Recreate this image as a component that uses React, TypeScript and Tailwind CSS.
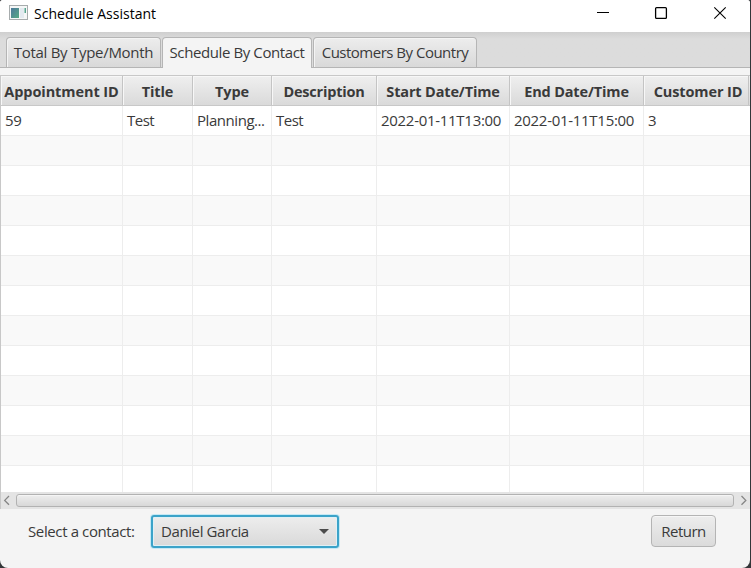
import React from "react";

const columns = [
  { name: "Appointment ID", value: "59", width: "w-[122px]", head: "tracking-[-0.08px]", cell: "tracking-[-0.3px]" },
  { name: "Title", value: "Test", width: "w-[70px]", head: "tracking-[-0.1px]", cell: "tracking-[-0.5px]" },
  { name: "Type", value: "Planning...", width: "w-[79px]", head: "tracking-[-0.1px]", cell: "tracking-[-0.45px]" },
  { name: "Description", value: "Test", width: "w-[105px]", head: "tracking-[-0.2px]", cell: "tracking-[-0.5px]" },
  { name: "Start Date/Time", value: "2022-01-11T13:00", width: "w-[133px]", head: "tracking-[-0.15px]", cell: "tracking-[-0.29px]" },
  { name: "End Date/Time", value: "2022-01-11T15:00", width: "w-[134px]", head: "tracking-[-0.15px]", cell: "tracking-[-0.29px]" },
  { name: "Customer ID", value: "3", width: "w-[105px]", head: "tracking-[-0.12px] pl-[4px]", cell: "tracking-[-0.3px]" },
];

const tabs = [
  { label: "Total By Type/Month", width: "w-[155px]", tracking: "tracking-[-0.28px]" },
  { label: "Schedule By Contact", width: "w-[150px]", tracking: "tracking-[-0.4px]" },
  { label: "Customers By Country", width: "w-[164px]", tracking: "tracking-[-0.5px]" },
];

function TitleBar() {
  return (
    <header className="flex h-8 shrink-0 items-start bg-white text-black">
      <svg className="ml-[9px] mt-[5px] shrink-0" width="19" height="15" viewBox="0 0 19 15">
        <defs>
          <linearGradient id="app" x1="0" y1="0" x2="1" y2="1">
            <stop offset="0" stopColor="#4d789b" />
            <stop offset="1" stopColor="#55aa84" />
          </linearGradient>
        </defs>
        <rect x="0.5" y="0.5" width="18" height="14" fill="#f5f7f7" stroke="#a7acad" />
        <rect x="2" y="3" width="8" height="10" fill="url(#app)" />
        <rect x="11" y="3" width="4" height="10" fill="#e3eaf0" />
        <rect x="15.5" y="3" width="1.5" height="5" fill="#57a58e" />
      </svg>
      <h1 className="ml-[6px] mt-[4px] text-[14px] leading-5 tracking-[0.02px] whitespace-nowrap">Schedule Assistant</h1>
      <svg className="ml-auto mr-[23px] mt-[6px]" width="130" height="14" viewBox="0 0 130 14" fill="none" stroke="#000" strokeWidth="1.1">
        <path d="M0 6.5h12" />
        <rect x="58.6" y="1.6" width="10.8" height="10.8" rx="1" strokeWidth="1.3" />
        <path d="M117.3 1.3l11.4 11.4M128.7 1.3L117.3 12.7" />
      </svg>
    </header>
  );
}

function TabBar() {
  return (
    <nav className="flex h-9 shrink-0 items-end gap-px border-b border-[#b5b5b5] bg-linear-to-b from-[#cfcfcf] via-[#dcdcdc] via-20% to-[#dcdcdc] pl-[6px]">
      {tabs.map((tab, i) => (
        <button
          key={tab.label}
          className={`flex h-[30px] shrink-0 items-center justify-center rounded-t-[4px] border border-[#b5b5b5] pb-px text-[15px] whitespace-nowrap ${tab.width} ${tab.tracking} ${
            i === 1 ? "-mb-px h-[31px] border-b-0 bg-[#f4f4f4]" : "border-b-0 bg-linear-to-b from-[#ededed] to-[#d9d9d9] shadow-[inset_1px_1px_0_#f4f4f4]"
          }`}
        >
          {tab.label}
        </button>
      ))}
    </nav>
  );
}

function Table() {
  return (
    <section className="mt-[7px] flex h-[434px] shrink-0 flex-col border-l border-t border-[#c8c8c8] bg-white">
      <div className="flex h-[30px] shrink-0 border-b border-[#c8c8c8] bg-linear-to-b from-[#efefef] to-[#dadada]">
        {columns.map((c) => (
          <div key={c.name} className={`flex shrink-0 items-center justify-center border-r border-[#c4c4c4] pt-[3px] text-[14.5px] font-bold whitespace-nowrap shadow-[inset_1px_1px_0_#f7f7f7] ${c.width} ${c.head}`}>
            {c.name}
          </div>
        ))}
      </div>
      <div className="h-[386px] overflow-hidden">
        {Array.from({ length: 13 }, (_, row) => (
          <div key={row} className={`flex h-[30px] border-b border-[#ededed] ${row % 2 ? "bg-[#f9f9f9]" : "bg-white"}`}>
            {columns.map((c, i) => (
              <div key={c.name} className={`flex shrink-0 items-center pl-[4px] text-[15px] whitespace-nowrap ${c.width} ${c.cell} ${i < 6 ? "border-r border-[#ededed]" : ""}`}>
                {row === 0 ? c.value : ""}
              </div>
            ))}
          </div>
        ))}
      </div>
      <div className="flex h-[17px] shrink-0 items-center bg-[#e4e4e4]">
        <svg className="shrink-0" width="15" height="17" viewBox="0 0 15 17" fill="none" stroke="#858585" strokeWidth="1.3">
          <path d="M8 4L3.7 8.4L8 12.8" />
        </svg>
        <div className="h-[13px] grow rounded-[3px] border border-[#b2b2b2] bg-linear-to-b from-[#eeeeee] to-[#d8d8d8] shadow-[inset_0_1px_0_#f5f5f5]" />
        <svg className="shrink-0" width="16" height="17" viewBox="0 0 16 17" fill="none" stroke="#858585" strokeWidth="1.3">
          <path d="M7.5 4L11.8 8.4L7.5 12.8" />
        </svg>
      </div>
    </section>
  );
}

export default function App() {
  return (
    <div className="h-[568px] w-[751px] overflow-hidden bg-[#333638] pr-px font-['Open_Sans',sans-serif] text-[#3a3a3a]">
      <main className="flex h-full flex-col overflow-hidden rounded-b-[8px] rounded-t-[3px] bg-[#f4f4f4]">
        <TitleBar />
        <TabBar />
        <Table />
        <footer className="flex grow items-start pl-[28px] pr-[34px] text-[15px] whitespace-nowrap">
          <label className="mt-[12px] w-[123px] leading-5 tracking-[-0.38px]">Select a contact:</label>
          <button className="mt-[6px] flex h-[33px] w-[188px] items-center justify-between rounded-[3px] border-2 border-[#3ba3c9] bg-linear-to-b from-[#ededed] to-[#d9d9d9] pl-[8px] pr-[8px] tracking-[-0.4px] shadow-[0_0_0_1px_#c5e9f5,inset_0_0_0_1px_#dff0f5]">
            Daniel Garcia
            <svg width="10" height="5" viewBox="0 0 10 5">
              <path d="M0 0h10L5 5z" fill="#4c4c4c" />
            </svg>
          </button>
          <button className="ml-auto mt-[6px] h-[32px] w-[65px] rounded-[4px] border border-[#b4b4b4] bg-linear-to-b from-[#ededed] to-[#dbdbdb] tracking-[-0.5px] shadow-[inset_0_1px_0_#f6f6f6]">
            Return
          </button>
        </footer>
      </main>
    </div>
  );
}
